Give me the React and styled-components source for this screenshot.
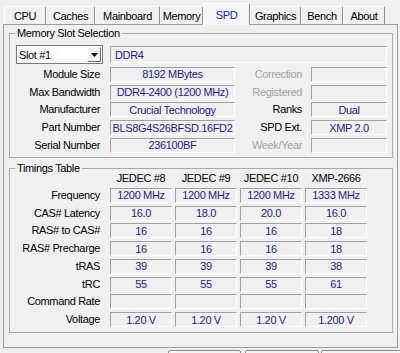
import React from 'react';
import styled, { createGlobalStyle } from 'styled-components';

const TABS = [
    { name: 'CPU', width: 42 },
    { name: 'Caches', width: 49 },
    { name: 'Mainboard', width: 65 },
    { name: 'Memory', width: 43 },
    { name: 'SPD', width: 47, active: true },
    { name: 'Graphics', width: 51 },
    { name: 'Bench', width: 42 },
    { name: 'About', width: 42 }
];

const MODULE_ROWS = [
    { label: 'Module Size', value: '8192 MBytes', side: 'Correction', sideValue: '', disabled: true },
    { label: 'Max Bandwidth', value: 'DDR4-2400 (1200 MHz)', side: 'Registered', sideValue: '', disabled: true },
    { label: 'Manufacturer', value: 'Crucial Technology', side: 'Ranks', sideValue: 'Dual' },
    { label: 'Part Number', value: 'BLS8G4S26BFSD.16FD2', side: 'SPD Ext.', sideValue: 'XMP 2.0' },
    { label: 'Serial Number', value: '236100BF', side: 'Week/Year', sideValue: '', disabled: true }
];

const TIMING_HEADERS = ['JEDEC #8', 'JEDEC #9', 'JEDEC #10', 'XMP-2666'];

const TIMING_ROWS = [
    ['Frequency', ['1200 MHz', '1200 MHz', '1200 MHz', '1333 MHz']],
    ['CAS# Latency', ['16.0', '18.0', '20.0', '16.0']],
    ['RAS# to CAS#', ['16', '16', '16', '18']],
    ['RAS# Precharge', ['16', '16', '16', '18']],
    ['tRAS', ['39', '39', '39', '38']],
    ['tRC', ['55', '55', '55', '61']],
    ['Command Rate', ['', '', '', '']],
    ['Voltage', ['1.20 V', '1.20 V', '1.20 V', '1.200 V']]
];

const FOOTER_BUTTONS = [
    { width: 73, gap: 0 },
    { width: 74, gap: 4 },
    { width: 81, gap: 2 }
];

const GlobalStyle = createGlobalStyle`
    html, body {
        margin: 0;
        padding: 0;
        background: #f0f0f0;
    }
    body {
        font-family: "Liberation Sans", Arial, sans-serif;
        font-size: 11px;
        letter-spacing: -0.35px;
        color: #000;
    }
`;

const Window = styled.div`
    width: 400px;
    height: 353px;
    overflow: hidden;
    background: #f0f0f0;
`;

const TabStrip = styled.div`
    display: flex;
    align-items: flex-end;
    height: 24px;
    padding-left: 4px;
    position: relative;
    z-index: 2;
`;

const Tab = styled.div`
    box-sizing: border-box;
    width: ${p => p.$w}px;
    height: ${p => (p.$active ? 22 : 18)}px;
    margin-bottom: ${p => (p.$active ? -1 : 0)}px;
    padding-top: 1px;
    display: flex;
    align-items: center;
    justify-content: center;
    line-height: 13px;
    background: ${p => (p.$active ? '#f5f5f5' : '#f0f0f0')};
    border-top: 1px solid #fff;
    border-left: 1px solid #fff;
    border-right: 1px solid #8e8e8e;
    border-radius: 2px 2px 0 0;
    color: ${p => (p.$active ? '#2222c8' : '#000')};
`;

const Panel = styled.div`
    box-sizing: border-box;
    height: 324px;
    margin: 0 2px 0 3px;
    padding-top: 2px;
    border: 1px solid #9c9c9c;
    position: relative;
    z-index: 1;
`;

const Group = styled.fieldset`
    margin: ${p => p.$top}px 4px 0 5px;
    padding: ${p => p.$padTop}px 0 ${p => p.$padBottom}px 0;
    border: 1px solid #a8a8a8;
    min-width: 0;
`;

const Legend = styled.legend`
    margin-left: 5px;
    padding: 0 2px;
    line-height: 13px;
`;

const Rows = styled.div`
    display: flex;
    flex-direction: column;
    gap: 2.75px;
`;

const Row = styled.div`
    display: flex;
    align-items: center;
    height: ${p => p.$h || 15}px;
`;

const HeaderRow = styled(Row)`
    margin-top: -4px;
    margin-bottom: 0.25px;
`;

const Label = styled.div`
    box-sizing: border-box;
    width: ${p => p.$w}px;
    flex: none;
    padding-right: ${p => p.$pad || 0}px;
    text-align: right;
    line-height: 15px;
    white-space: nowrap;
    color: ${p => (p.$disabled ? '#a2a2a2' : '#000')};
`;

const Field = styled.div`
    box-sizing: border-box;
    width: ${p => p.$w}px;
    height: ${p => p.$h || 15}px;
    margin-left: ${p => p.$ml || 0}px;
    flex: none;
    display: flex;
    align-items: center;
    justify-content: ${p => (p.$left ? 'flex-start' : 'center')};
    padding: 0 ${p => (p.$left ? 4 : 0)}px;
    border-top: 1px solid #a0a0a0;
    border-left: 1px solid #a0a0a0;
    border-right: 1px solid #fff;
    border-bottom: 1px solid #fff;
    color: #1c1c8e;
    white-space: nowrap;
    overflow: hidden;
`;

const Combo = styled.div`
    box-sizing: border-box;
    width: 87px;
    height: 19px;
    margin-left: 6px;
    flex: none;
    display: flex;
    align-items: center;
    justify-content: space-between;
    padding: 0 1px 0 2px;
    background: #fff;
    border: 1px solid #7a7a7a;
`;

const ComboButton = styled.span`
    box-sizing: border-box;
    width: 14px;
    height: 15px;
    display: flex;
    align-items: center;
    justify-content: center;
    background: #f0f0f0;
    border-top: 1px solid #fff;
    border-left: 1px solid #fff;
    border-right: 1px solid #6e6e6e;
    border-bottom: 1px solid #6e6e6e;
`;

const HeaderCell = styled.div`
    width: 62px;
    flex: none;
    margin-left: ${p => p.$ml}px;
    text-align: center;
    line-height: 14px;
    white-space: nowrap;
`;

const Footer = styled.div`
    display: flex;
    margin-top: 2px;
    padding-left: 168px;
`;

const FooterButton = styled.div`
    box-sizing: border-box;
    width: ${p => p.$w}px;
    height: 23px;
    margin-left: ${p => p.$gap}px;
    flex: none;
    border: 1px solid #8a8a8a;
    border-radius: 2px;
    background: linear-gradient(#f6f6f6, #dedede);
`;

function DropArrow() {
    return (
        <svg width="7" height="4" viewBox="0 0 7 4">
            <polygon points="0,0 7,0 3.5,4" fill="#000" />
        </svg>
    );
}

export default function App() {
    return (
        <Window>
            <GlobalStyle />
            <TabStrip>
                {TABS.map(tab => (
                    <Tab key={tab.name} $w={tab.width} $active={tab.active}>
                        {tab.name}
                    </Tab>
                ))}
            </TabStrip>
            <Panel>
                <Group $top={0} $padTop={5} $padBottom={4}>
                    <Legend>Memory Slot Selection</Legend>
                    <Rows>
                        <Row $h={19}>
                            <Combo>
                                <span>Slot #1</span>
                                <ComboButton><DropArrow /></ComboButton>
                            </Combo>
                            <Field $w={277} $h={17} $ml={7} $left>DDR4</Field>
                        </Row>
                        {MODULE_ROWS.map(row => (
                            <Row key={row.label}>
                                <Label $w={100} $pad={10}>{row.label}</Label>
                                <Field $w={125}>{row.value}</Field>
                                <Label $w={67} $disabled={row.disabled}>{row.side}</Label>
                                <Field $w={76} $ml={9}>{row.sideValue}</Field>
                            </Row>
                        ))}
                    </Rows>
                </Group>
                <Group $top={4} $padTop={0} $padBottom={5}>
                    <Legend>Timings Table</Legend>
                    <Rows>
                        <HeaderRow $h={14}>
                            <Label $w={100} />
                            {TIMING_HEADERS.map((h, i) => (
                                <HeaderCell key={h} $ml={i === 0 ? 0 : 3}>{h}</HeaderCell>
                            ))}
                        </HeaderRow>
                        {TIMING_ROWS.map(([label, values]) => (
                            <Row key={label}>
                                <Label $w={100} $pad={10}>{label}</Label>
                                {values.map((v, i) => (
                                    <Field key={i} $w={62} $ml={i === 0 ? 0 : 3}>{v}</Field>
                                ))}
                            </Row>
                        ))}
                    </Rows>
                </Group>
            </Panel>
            <Footer>
                {FOOTER_BUTTONS.map((b, i) => (
                    <FooterButton key={i} $w={b.width} $gap={b.gap} />
                ))}
            </Footer>
        </Window>
    );
}
